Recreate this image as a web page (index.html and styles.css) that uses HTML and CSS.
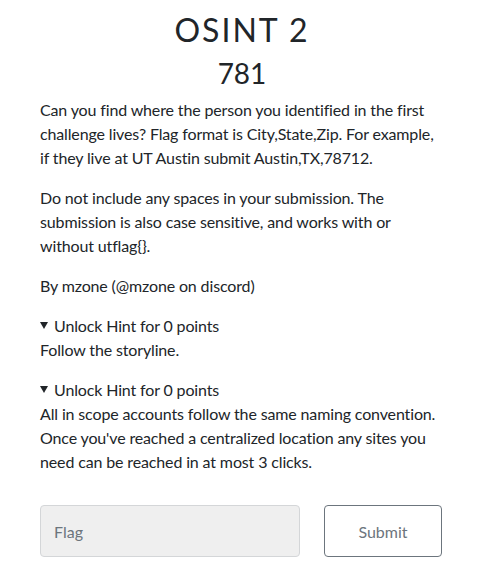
FILE: index.html
```html
<!DOCTYPE html>
<html>
<head>
<meta charset="utf-8">
<link rel="stylesheet" href="styles.css">
</head>
<body>
<div class="modal">
  <h2 class="challenge-name">OSINT 2</h2>
  <h3 class="challenge-value">781</h3>
  <div class="desc">
    <p>Can you find where the person you identified in the first challenge lives? Flag format is City,State,Zip. For example, if they live at UT Austin submit Austin,TX,78712.</p>
    <p>Do not include any spaces in your submission. The submission is also case sensitive, and works with or without utflag{}.</p>
    <p>By mzone (@mzone on discord)</p>
  </div>
  <details class="hint" open>
    <summary>Unlock Hint for 0 points</summary>
    <p>Follow the storyline.</p>
  </details>
  <details class="hint" open>
    <summary>Unlock Hint for 0 points</summary>
    <p>All in scope accounts follow the same naming convention. Once you've reached a centralized location any sites you need can be reached in at most 3 clicks.</p>
  </details>
  <div class="submit-row">
    <input class="flag-input" type="text" placeholder="Flag">
    <button class="submit-btn">Submit</button>
  </div>
</div>
</body>
</html>
```
FILE: styles.css
```css
* { box-sizing: border-box; }
html, body { margin: 0; padding: 0; background: #fff; }
body {
  font-family: Lato, "Open Sans", sans-serif;
  font-size: 16px;
  line-height: 24px;
  letter-spacing: -0.14px;
  color: #212529;
}
.modal {
  padding: 11px 40px 0 40px;
}
.challenge-name {
  margin: 0;
  text-align: center;
  font-size: 32px;
  font-weight: 400;
  letter-spacing: 2px;
  line-height: 38px;
}
.challenge-value {
  margin: 7px 0 8px 0;
  text-align: center;
  font-size: 28px;
  font-weight: 400;
  letter-spacing: 0;
  line-height: 34px;
}
p { margin: 0 0 16px 0; }
.hint { margin: 0 0 16px 0; }
.hint summary {
  cursor: pointer;
  list-style: none;
}
.hint summary::-webkit-details-marker { display: none; }
.hint summary::before {
  content: "";
  display: inline-block;
  width: 0;
  height: 0;
  border-left: 4px solid transparent;
  border-right: 4px solid transparent;
  border-top: 7px solid #212529;
  margin: 0 6px 0 0;
  vertical-align: 3px;
}
.hint p { margin: 0; }
.submit-row {
  display: flex;
  gap: 24px;
  margin-top: 31px;
}
.flag-input {
  width: 260px;
  height: 52px;
  padding: 0 13px;
  font-family: Lato, sans-serif;
  font-size: 16px;
  background: #efefef;
  border: 1px solid #d4d6d8;
  border-radius: 4px;
  color: #495057;
}
.flag-input::placeholder { color: #6c757d; }
.submit-btn {
  width: 118px;
  height: 52px;
  font-family: Lato, sans-serif;
  font-size: 16px;
  color: #6c757d;
  background: #fff;
  border: 1px solid #6c757d;
  border-radius: 4px;
}
```
